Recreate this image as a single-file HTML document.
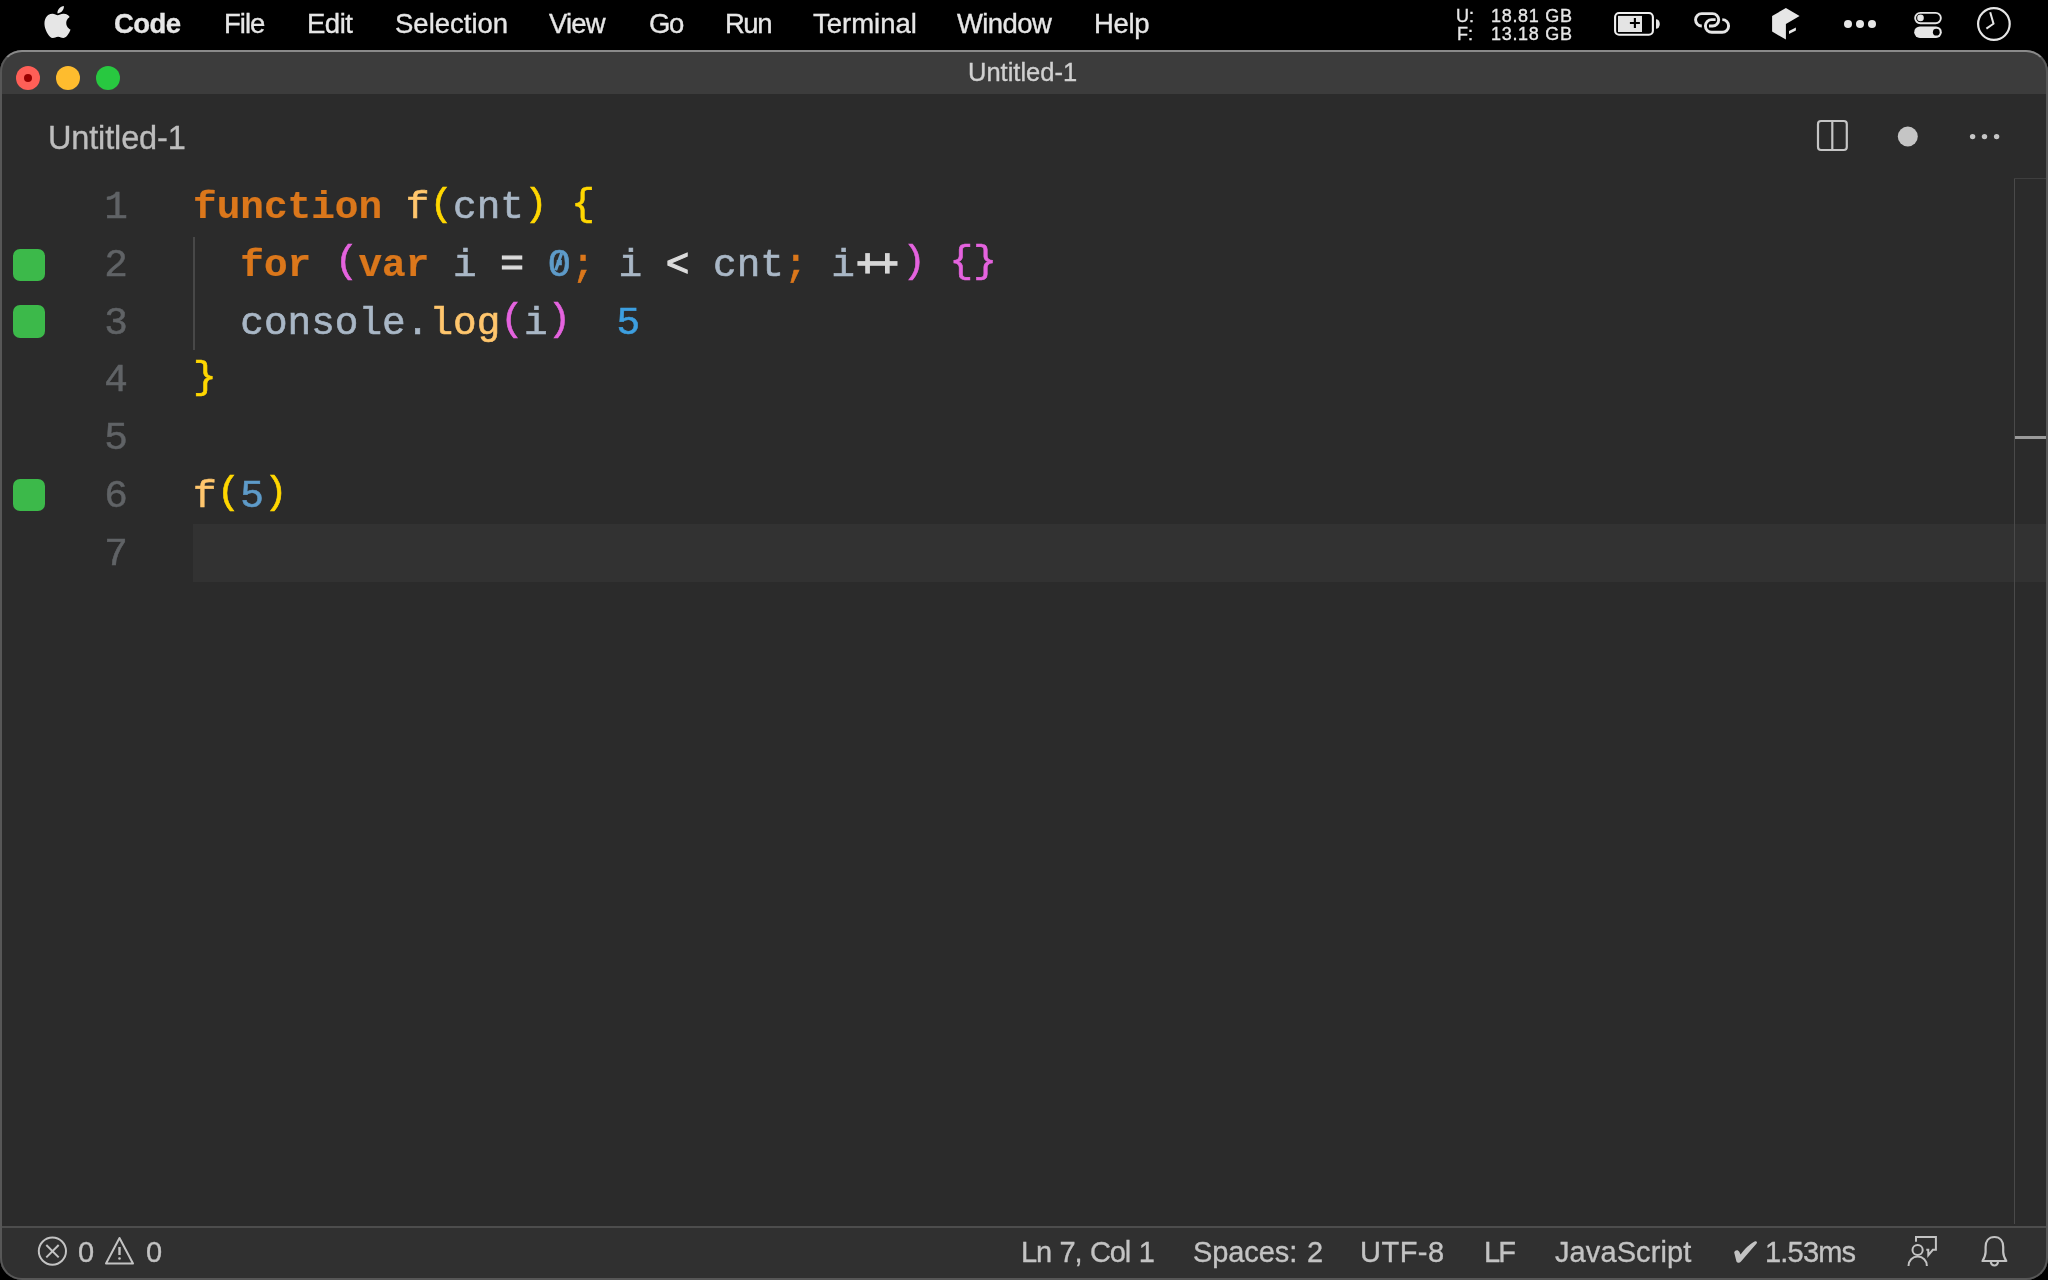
<!DOCTYPE html>
<html><head><meta charset="utf-8">
<style>
*{margin:0;padding:0;box-sizing:border-box}
html,body{width:2048px;height:1280px;overflow:hidden;background:#000}
body{position:relative;font-family:"Liberation Sans",sans-serif}
.a{position:absolute}
.t{position:absolute;white-space:pre;line-height:1;will-change:transform;-webkit-text-stroke:0.35px currentColor}
.mb{color:#e6e6e6;font-size:27.5px;top:10px}
#win{position:absolute;left:0;top:50px;width:2048px;height:1230px;border-radius:22px;background:#2b2b2b;overflow:hidden}
#inner{position:absolute;left:0;top:-50px;width:2048px;height:1280px}
#frame{position:absolute;left:0;top:50px;width:2048px;height:1230px;border-radius:22px;border:2px solid #575757;border-top-color:#8a8a8a}
.code{will-change:transform;-webkit-text-stroke:0.6px currentColor;position:absolute;left:193px;top:179px;font-family:"Liberation Mono",monospace;font-size:39.4px;line-height:57.75px;white-space:pre;color:#a9b7c6}
.ln{will-change:transform;-webkit-text-stroke:0.5px currentColor;position:absolute;left:60px;top:179px;width:68px;text-align:right;font-family:"Liberation Mono",monospace;font-size:39.4px;line-height:57.75px;color:#606366;white-space:pre}
.kw{color:#db771b;font-weight:bold;-webkit-text-stroke:0.2px currentColor}
.fn{color:#ffc66d}
.b1{color:#ffd700;position:relative;top:-3.5px}
.b2{color:#e563df;position:relative;top:-3.5px}
.num{color:#5e9bc9}
.op{color:#dcdcdc;-webkit-text-stroke:1.2px currentColor}
.semi{color:#db771b}
.gsq{position:absolute;left:12.8px;width:32.2px;height:32.4px;border-radius:7px;background:#3cb94a}
.st{color:#c3c3c3;font-size:29px;top:1238px}
</style></head>
<body>
<!-- menu bar -->
<svg class="a" style="left:0;top:0" width="80" height="50" viewBox="0 0 80 50"><path fill="#e6e6e6" transform="translate(41.5 6) scale(1.333)" d="M12.152 6.896c-.948 0-2.415-1.078-3.96-1.04-2.04.027-3.91 1.183-4.961 3.014-2.117 3.675-.546 9.103 1.519 12.09 1.013 1.454 2.208 3.09 3.792 3.039 1.52-.065 2.09-.987 3.935-.987 1.831 0 2.35.987 3.96.948 1.637-.026 2.676-1.48 3.676-2.948 1.156-1.688 1.636-3.325 1.662-3.415-.039-.013-3.182-1.221-3.22-4.857-.026-3.04 2.48-4.494 2.597-4.559-1.429-2.09-3.623-2.324-4.39-2.376-2-.156-3.675 1.09-4.61 1.09zM15.53 3.83c.843-1.012 1.4-2.427 1.245-3.83-1.207.052-2.662.805-3.532 1.818-.78.896-1.454 2.338-1.273 3.714 1.338.104 2.715-.688 3.559-1.701"/></svg>
<div class="t mb" style="left:114px;font-weight:bold;letter-spacing:-0.6px">Code</div>
<div class="t mb" style="left:224px;letter-spacing:-1px">File</div>
<div class="t mb" style="left:307px;letter-spacing:-0.5px">Edit</div>
<div class="t mb" style="left:395px">Selection</div>
<div class="t mb" style="left:549px;letter-spacing:-0.8px">View</div>
<div class="t mb" style="left:649px;letter-spacing:-1.5px">Go</div>
<div class="t mb" style="left:725px;letter-spacing:-1.5px">Run</div>
<div class="t mb" style="left:813px">Terminal</div>
<div class="t mb" style="left:957px;letter-spacing:-0.6px">Window</div>
<div class="t mb" style="left:1094px;letter-spacing:-0.3px">Help</div>

<div class="t" style="left:1456px;top:7px;font-size:18px;line-height:18px;color:#e6e6e6">U:</div>
<div class="t" style="left:1457px;top:25px;font-size:18px;line-height:18px;color:#e6e6e6">F:</div>
<div class="t" style="left:1491px;top:7px;font-size:18px;line-height:18px;color:#e6e6e6;letter-spacing:0.7px">18.81 GB</div>
<div class="t" style="left:1491px;top:25px;font-size:18px;line-height:18px;color:#e6e6e6;letter-spacing:0.7px">13.18 GB</div>

<svg class="a" style="left:1600px;top:0" width="448" height="50" viewBox="1600 0 448 50">
  <!-- battery -->
  <rect x="1615.1" y="13" width="37.8" height="21.8" rx="4" fill="none" stroke="#f0f0f0" stroke-width="2.1"/>
  <rect x="1618" y="15.9" width="24" height="16.1" fill="#e4e4e4"/>
  <path d="M1634.9 18V28M1629.9 23H1639.9" stroke="#000" stroke-width="2.1"/>
  <path d="M1656 19.2A3.8 4.8 0 0 1 1656 28.8Z" fill="#e6e6e6"/>
  <!-- link -->
  <path d="M1701.8 26A6.2 6.2 0 0 1 1701.7 13.6L1712.5 13.6A6.2 6.2 0 0 1 1712.5 26L1709 26" fill="none" stroke="#e6e6e6" stroke-width="2.9"/>
  <path d="M1722.3 19.6A6.35 6.35 0 0 1 1722.2 32.3L1711.75 32.3A6.35 6.35 0 0 1 1711.75 19.6L1715.6 19.6" fill="none" stroke="#e6e6e6" stroke-width="2.9"/>
  <!-- box -->
  <path d="M1785.9 8.1L1799.6 15.9L1785.9 24L1785.9 39.6L1772.1 31.5L1772.1 15.9Z" fill="#e6e6e6"/>
  <path d="M1789 30.9L1795.9 27.4L1795.9 30.6L1789 34Z" fill="#e6e6e6"/>
  <!-- dots -->
  <circle cx="1848" cy="24" r="4" fill="#e6e6e6"/>
  <circle cx="1860" cy="24" r="4" fill="#e6e6e6"/>
  <circle cx="1872" cy="24" r="4" fill="#e6e6e6"/>
  <!-- toggles -->
  <rect x="1915.15" y="12.9" width="25.7" height="10.4" rx="5.2" fill="none" stroke="#e6e6e6" stroke-width="1.9"/>
  <circle cx="1920.5" cy="17.9" r="3.3" fill="#e6e6e6"/>
  <rect x="1914.2" y="26.4" width="27.6" height="11.5" rx="5.75" fill="#e6e6e6"/>
  <circle cx="1936.3" cy="32.2" r="3.4" fill="#000"/>
  <!-- clock -->
  <circle cx="1993.9" cy="24" r="15.8" fill="none" stroke="#e6e6e6" stroke-width="2.2"/>
  <path d="M1990.2 12.2L1993.5 23.7L1986.4 28.6" fill="none" stroke="#e6e6e6" stroke-width="2"/>
</svg>

<div id="win"><div id="inner">
  <!-- title bar -->
  <div class="a" style="left:0;top:50px;width:2048px;height:44px;background:#3c3c3c"></div>
  <div class="a" style="left:16px;top:66px;width:24px;height:24px;border-radius:50%;background:#ff5f57"></div>
  <div class="a" style="left:24px;top:74px;width:8px;height:8px;border-radius:50%;background:#990000"></div>
  <div class="a" style="left:56px;top:66px;width:24px;height:24px;border-radius:50%;background:#febc2e"></div>
  <div class="a" style="left:96px;top:66px;width:24px;height:24px;border-radius:50%;background:#28c840"></div>
  <div class="t" style="left:968px;top:60px;font-size:25.5px;color:#d0d0d0">Untitled-1</div>

  <!-- tab bar -->
  <div class="t" style="left:48px;top:121.5px;font-size:32.5px;color:#bdbdbd;letter-spacing:-0.15px">Untitled-1</div>
  <svg class="a" style="left:1800px;top:100px" width="248" height="70" viewBox="1800 100 248 70">
    <rect x="1818" y="121" width="28.8" height="29" rx="3" fill="none" stroke="#c5c5c5" stroke-width="2.2"/>
    <path d="M1832.3 121V150" stroke="#c5c5c5" stroke-width="2.2"/>
    <circle cx="1907.8" cy="136.5" r="10" fill="#c5c5c5"/>
    <circle cx="1972.6" cy="136.6" r="2.7" fill="#c5c5c5"/>
    <circle cx="1984.5" cy="136.6" r="2.7" fill="#c5c5c5"/>
    <circle cx="1996.6" cy="136.6" r="2.7" fill="#c5c5c5"/>
  </svg>

  <!-- editor -->
  <div class="a" style="left:193px;top:524.4px;width:1855px;height:57.5px;background:#323232"></div>
  <div class="a" style="left:193px;top:236.7px;width:2px;height:113px;background:#484848"></div>
  <div class="a" style="left:2014px;top:178px;width:1px;height:1046px;background:#4a4a4a"></div>
  <div class="a" style="left:2014px;top:178px;width:34px;height:1px;background:#3e3e3e"></div>
  <div class="a" style="left:2015px;top:435.5px;width:31px;height:3px;background:#9a9a9a"></div>
  <div class="gsq" style="top:248.5px"></div>
  <div class="gsq" style="top:305.2px"></div>
  <div class="gsq" style="top:478.5px"></div>
  <div class="ln">1
2
3
4
5
6
7</div>
  <div class="code"><span class="kw">function</span> <span class="fn">f</span><span class="b1">(</span>cnt<span class="b1">)</span> <span class="b1">{</span>
  <span class="kw">for</span> <span class="b2">(</span><span class="kw">var</span> i <span class="op">=</span> <span class="num">0</span><span class="semi">;</span> i <span class="op">&lt;</span> cnt<span class="semi">;</span> i<span class="op">  </span><span class="b2">)</span> <span class="b2">{}</span>
  console.<span class="fn">log</span><span class="b2">(</span>i<span class="b2">)</span>  <span style="color:#3d9fe0;position:relative;left:-2px">5</span>
<span class="b1">}</span>

<span class="fn">f</span><span class="b1">(</span><span class="num">5</span><span class="b1">)</span>
</div>

  <svg class="a" style="left:540px;top:240px" width="400" height="50" viewBox="540 240 400 50">
    <path d="M555.6 270.2L561.6 253.2" stroke="#5e9bc9" stroke-width="3.2"/>
    <rect x="857.4" y="261.1" width="40.1" height="4.7" fill="#d6d6d6"/>
    <rect x="865.2" y="253.1" width="4.7" height="20.5" fill="#d6d6d6"/>
    <rect x="885" y="253.1" width="4.7" height="20.5" fill="#d6d6d6"/>
  </svg>
  <!-- status bar -->
  <div class="a" style="left:0;top:1226px;width:2048px;height:2px;background:#4d4d4d"></div>
  <div class="a" style="left:0;top:1228px;width:2048px;height:52px;background:#303030"></div>
  <svg class="a" style="left:0;top:1228px" width="2048" height="52" viewBox="0 1228 2048 52">
    <circle cx="52.4" cy="1251.1" r="13.6" fill="none" stroke="#c3c3c3" stroke-width="2"/>
    <path d="M46.3 1245L58.7 1257.4M58.7 1245L46.3 1257.4" stroke="#c3c3c3" stroke-width="2"/>
    <path d="M119.5 1238L133 1263.5H106Z" fill="none" stroke="#c3c3c3" stroke-width="2" stroke-linejoin="round"/>
    <path d="M119.5 1247v8" stroke="#c3c3c3" stroke-width="2.4"/>
    <circle cx="119.5" cy="1258.5" r="1.3" fill="#c3c3c3"/>
    <path d="M1916 1241.8V1237.1H1935.9V1249.8H1932.8L1928.3 1255.3V1249.8H1926.3" fill="none" stroke="#c3c3c3" stroke-width="2"/>
    <circle cx="1917.6" cy="1250" r="5.1" fill="none" stroke="#c3c3c3" stroke-width="2"/>
    <path d="M1908.5 1266C1908.5 1260.5 1912.5 1256.6 1917.7 1256.6S1926.9 1260.5 1926.9 1266" fill="none" stroke="#c3c3c3" stroke-width="2"/>
    <path d="M1994.4 1237C1988.5 1237 1985.6 1241.5 1985.6 1247V1252C1985.6 1255 1984 1258.5 1982.5 1261H2006.3C2004.8 1258.5 2003.2 1255 2003.2 1252V1247C2003.2 1241.5 2000.3 1237 1994.4 1237Z" fill="none" stroke="#c3c3c3" stroke-width="2.2" stroke-linejoin="round"/>
    <path d="M1734.2 1252.6C1735 1249.6 1738.2 1249.4 1739.3 1251.8L1740.6 1254.4C1744.5 1249 1750 1243.6 1754.6 1241.4C1756.6 1240.6 1757.6 1242 1756.6 1243.6C1751.5 1249.5 1746 1255.5 1741 1261.5C1739.4 1263.3 1737 1263 1736.4 1261.2Z" fill="#c3c3c3"/>
    <path d="M1990.9 1262A3.5 3.5 0 0 0 1997.9 1262" fill="none" stroke="#c3c3c3" stroke-width="2.2"/>
  </svg>
  <div class="t st" style="left:78px">0</div>
  <div class="t st" style="left:146px">0</div>
  <div class="t st" style="left:1021px;letter-spacing:-1.1px;word-spacing:1.5px">Ln 7, Col 1</div>
  <div class="t st" style="left:1193px;letter-spacing:-0.1px;word-spacing:2px">Spaces: 2</div>
  <div class="t st" style="left:1360px;letter-spacing:0.5px">UTF-8</div>
  <div class="t st" style="left:1484px;letter-spacing:-2px">LF</div>
  <div class="t st" style="left:1555px;letter-spacing:0.1px">JavaScript</div>
    <div class="t st" style="left:1765px;letter-spacing:-0.8px">1.53ms</div>
</div></div>
<div id="frame"></div>
</body></html>
